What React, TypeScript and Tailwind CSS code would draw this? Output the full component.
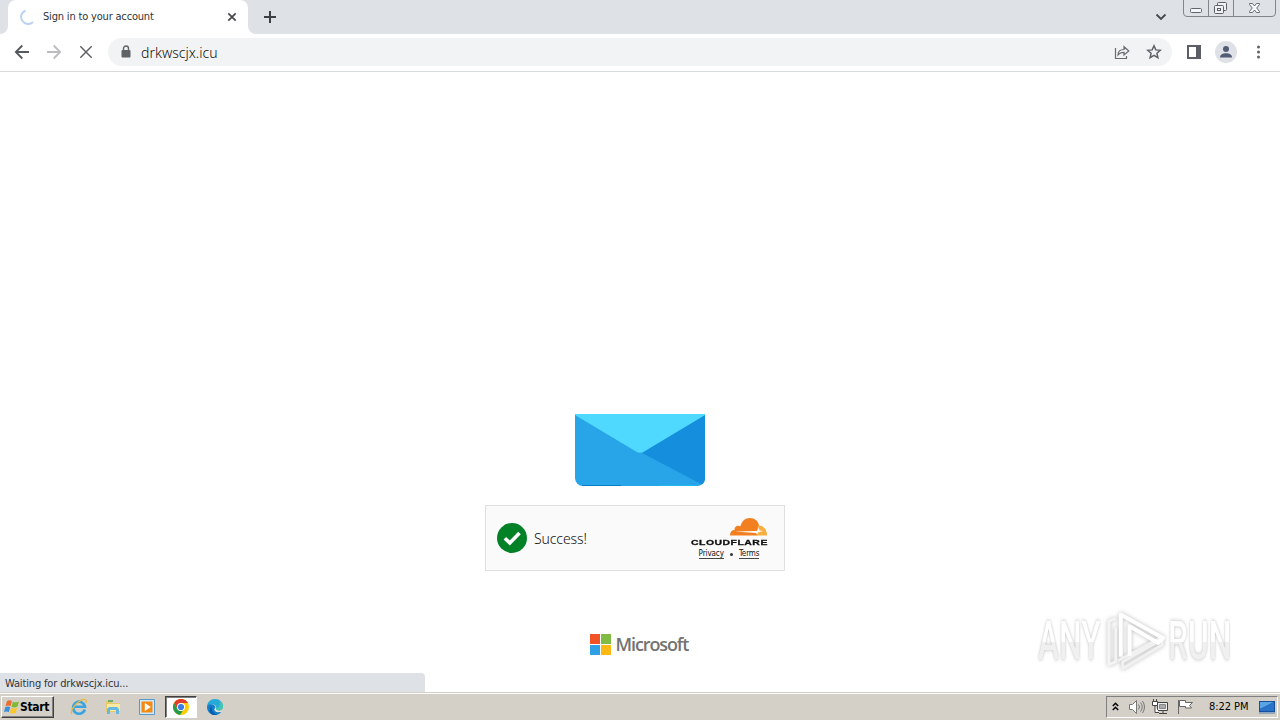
import type { ReactNode } from "react";

const ui = "font-['DejaVu_Sans_Condensed','DejaVu_Sans',sans-serif] font-stretch-condensed";

function TabStrip() {
  return (
    <div className="flex h-[34px] shrink-0 bg-[#dee1e6]">
      <div className="relative ml-2 flex h-full w-60 items-center rounded-t-lg bg-white pl-3">
        <svg className="absolute bottom-0 -left-2 h-2 w-2" viewBox="0 0 8 8">
          <path d="M8 0v8H0a8 8 0 0 0 8-8z" fill="#fff" />
        </svg>
        <svg className="absolute -right-2 bottom-0 h-2 w-2" viewBox="0 0 8 8">
          <path d="M0 0v8h8a8 8 0 0 1-8-8z" fill="#fff" />
        </svg>
        <svg className="h-4 w-4 shrink-0" viewBox="0 0 16 16" fill="none">
          <path d="M5.500 1.500A7 7 0 1 0 13 13" stroke="#bcd2f3" strokeWidth="2" />
        </svg>
        <span className="mt-px ml-[7px] w-[184px] text-[11px] tracking-[-0.18px] whitespace-nowrap text-[#303336]">
          Sign in to your account
        </span>
        <svg className="h-[10px] w-[10px] shrink-0" viewBox="0 0 10 10">
          <path d="M1.300 1.300l7.400 7.400M8.700 1.300L1.300 8.700" stroke="#45494d" strokeWidth="1.700" />
        </svg>
      </div>
      <svg className="mt-[10px] ml-[15px] h-[14px] w-[14px]" viewBox="0 0 14 14">
        <path d="M7 1v12M1 7h12" stroke="#3c4043" strokeWidth="2" />
      </svg>
      <svg className="mt-[13px] ml-auto h-2 w-3" viewBox="0 0 12 8" fill="none">
        <path d="M1.500 1.500L6 6l4.500-4.500" stroke="#45494d" strokeWidth="1.800" />
      </svg>
      <WindowButtons />
    </div>
  );
}

function WindowButtons() {
  return (
    <svg className="mr-1 ml-4 h-[17px] w-[93px]" viewBox="0 0 93 17" fill="none" stroke="#82868c">
      <path d="M.5 0v13a3.500 3.500 0 0 0 3.500 3.500h85a3.500 3.500 0 0 0 3.500-3.500V0M25.500 0v16M50.500 0v16" />
      <rect x="7.500" y="8.500" width="11" height="4" rx="1" fill="#f5f6f8" stroke="#62666c" />
      <g fill="#eef0f3" stroke="#5d6167">
        <rect x="34.500" y="2.500" width="9" height="8" rx="1" />
        <rect x="31.500" y="5.500" width="9" height="8" rx="1" />
        <rect x="34.500" y="8.500" width="3" height="2" />
      </g>
      <path
        d="M66.500 3.500h3l2 2.500 2-2.500h3v1l-2.800 3.500 2.800 3.500v1h-3l-2-2.500-2 2.500h-3v-1L69.300 8l-2.800-3.500z"
        fill="#f8f9fa"
        stroke="#686c72"
      />
    </svg>
  );
}

function Toolbar() {
  return (
    <div className="flex h-[38px] shrink-0 items-center border-b border-[#d8dadd] bg-white pb-px pl-[14px]">
      <svg className="h-4 w-4" viewBox="0 0 16 16" fill="none" stroke="#55595e" strokeWidth="1.800">
        <path d="M15 8H2M8.300 1.500L1.800 8l6.500 6.500" />
      </svg>
      <svg className="ml-4 h-4 w-4" viewBox="0 0 16 16" fill="none" stroke="#babcbe" strokeWidth="1.800">
        <path d="M1 8h13M7.700 1.500L14.200 8l-6.500 6.500" />
      </svg>
      <svg className="ml-4 h-4 w-4" viewBox="0 0 16 16" fill="none" stroke="#5f6368" strokeWidth="1.500">
        <path d="M2.300 2.300l11.400 11.400M13.700 2.300L2.300 13.700" />
      </svg>
      <div className="ml-[14px] flex h-7 w-[1064px] items-center rounded-full bg-[#f1f3f4] pl-3">
        <svg className="h-[14px] w-3" viewBox="0 0 12 14">
          <rect x="1.500" y="5" width="9" height="7.500" rx="1" fill="#5f6368" />
          <path d="M3.500 6V3.500a2.500 2.500 0 0 1 5 0V6" fill="none" stroke="#5f6368" strokeWidth="1.400" />
        </svg>
        <span className="mt-px ml-[9px] font-['Noto_Sans','Open_Sans',sans-serif] text-[14px] font-light tracking-[0.02px] text-[#111]">
          drkwscjx.icu
        </span>
        <svg className="ml-auto h-4 w-4" viewBox="0 0 16 16" fill="none" stroke="#686c70" strokeWidth="1.200">
          <path d="M1.500 4v10.500h11V12" />
          <path d="M4 11c0-4 2.300-5.500 6-5.500V2.700L14.800 7 10 11V8.300C7.500 8.300 5.500 9 4 11z" />
        </svg>
        <svg className="mr-[10px] ml-4 h-4 w-4" viewBox="0 0 16 16" fill="none" stroke="#5f6368" strokeWidth="1.500">
          <path d="M8 1.800l1.800 4.100 4.500.4-3.400 2.900 1 4.400L8 11.300l-3.900 2.300 1-4.400-3.400-2.900 4.500-.4z" />
        </svg>
      </div>
      <svg className="ml-[14px] h-4 w-4" viewBox="0 0 16 16">
        <path d="M1 1h14v14H1z" fill="#5b5e65" />
        <path d="M3 3h7v10H3z" fill="#fff" />
      </svg>
      <svg className="ml-[13px] h-[22px] w-[22px]" viewBox="0 0 22 22">
        <circle cx="11" cy="11" r="11" fill="#dee1e6" />
        <circle cx="11" cy="8" r="3" fill="#515b73" />
        <path d="M5 16.500c0-3 3-4.200 6-4.200s6 1.200 6 4.200z" fill="#515b73" />
      </svg>
      <svg className="ml-[19px] h-4 w-[5px]" viewBox="0 0 5 16" fill="#5f6368">
        <circle cx="2.500" cy="3" r="1.500" />
        <circle cx="2.500" cy="8" r="1.500" />
        <circle cx="2.500" cy="13" r="1.500" />
      </svg>
    </div>
  );
}

function Envelope() {
  return (
    <svg className="mt-[342px] h-[72px] w-[130px] shrink-0" viewBox="0 0 130 72">
      <path d="M0 1h130v63a8 8 0 0 1-8 8H8a8 8 0 0 1-8-8z" fill="#28a5e9" />
      <path d="M130 1v63c0 3-1 5-3 6.500L67 39z" fill="#158ede" />
      <path d="M0 0h130v1L69 37.500q-4 2.500-8 0L0 1z" fill="#50d9ff" />
      <path d="M7 71.500h39" stroke="#087bc9" />
      <path d="M84 71.500h38" stroke="#20b8ed" />
    </svg>
  );
}

function Turnstile() {
  return (
    <div className="mt-[19px] mr-[10px] flex h-[66px] w-[300px] shrink-0 items-center border border-[#e0e0e0] bg-[#fafafa] pl-[11px]">
      <svg className="h-[30px] w-[30px]" viewBox="0 0 30 30">
        <circle cx="15" cy="15" r="15" fill="#038127" />
        <path d="M7.800 15.200l5 4.700L22.500 10" fill="none" stroke="#fff" strokeWidth="3.600" />
      </svg>
      <span className="ml-[7px] font-['Noto_Sans','Open_Sans',sans-serif] text-[14px] font-light tracking-[-0.1px] text-[#111]">
        Success!
      </span>
      <div className="mt-px mr-4 ml-auto flex w-[78px] flex-col items-center">
        <svg className="mr-[1px] h-[18px] w-[37px] self-end" viewBox="0 0 37 18">
          <path
            d="M0 17.500c0-3.500 1.700-5.500 4.600-5.500-.5-3.300 3-5.300 5.700-3.600C11.700 3.500 15 0 20 0c4.700 0 8 3 9 7.300l-2 10.200z"
            fill="#f38020"
          />
          <path d="M26 17.500l2-10c5-.5 9 3.500 9 10z" fill="#faae40" />
          <path d="M5 13.600l21-.6c1.500 0 2-1.500 2.500-4l1 3.500 4 .5-5 1.200-1.500 2-1-1.200z" fill="#fff" />
        </svg>
        <div className="mt-[2px] h-[9px] w-[76px]">
          <div className="w-max origin-left scale-x-[1.300] font-['Liberation_Sans',sans-serif] text-[8px] leading-[9px] font-bold font-stretch-normal tracking-[0.400px] text-[#111] [-webkit-text-stroke:0.300px_#111]">
            CLOUDFLARE
          </div>
        </div>
        <div className={`${ui} mt-[3px] flex h-[9px] items-center text-[8px] leading-[8px] tracking-[-0.100px] text-[#111]`}>
          <span className="border-b border-[#444]">Privacy</span>
          <span className="mx-[6px] h-[3px] w-[3px] rounded-full bg-[#333]" />
          <span className="border-b border-[#444]">Terms</span>
        </div>
      </div>
    </div>
  );
}

function MicrosoftLogo() {
  return (
    <div className="mt-[62px] mr-[2px] flex h-[22px] items-center gap-[5px]">
      <div className="grid h-[21px] w-[21px] grid-cols-2 gap-px">
        <span className="bg-[#f15325]" />
        <span className="bg-[#80bc43]" />
        <span className="bg-[#2fa0e4]" />
        <span className="bg-[#fdb913]" />
      </div>
      <span className="w-[73px] font-['Open_Sans',sans-serif] text-[18px] leading-[22px] font-semibold font-stretch-normal tracking-[-1.100px] whitespace-nowrap text-[#737373]">
        Microsoft
      </span>
    </div>
  );
}

function Watermark() {
  const word =
    "font-['Roboto',sans-serif] text-[53px] leading-[54px] font-medium font-stretch-normal whitespace-nowrap bg-linear-to-b from-white from-52% to-[#f0f0f0] to-52% bg-clip-text text-transparent drop-shadow-[0_0_2px_#bbb]";
  return (
    <div className="absolute top-[536px] left-[1038px] flex h-[66px] w-[200px] items-center">
      <div className="w-[67px]">
        <div className={`${word} w-max origin-left scale-x-[0.6]`}>ANY</div>
      </div>
      <svg
        className="h-[66px] w-[63px] shrink-0 overflow-visible drop-shadow-[0_0_2px_#bbb]"
        viewBox="0 0 64 66"
        fill="none"
        stroke="#fff"
        strokeWidth="4"
        strokeLinejoin="round"
      >
        <path d="M11 10l-7 3v44l7-3V19" strokeWidth="3" stroke="#f4f4f4" />
        <path d="M13 53l45-24v8L18 61v-7l37-21" strokeWidth="3" stroke="#f1f1f1" />
        <path d="M16 49V6l43 24-5 5-29-17v30" />
      </svg>
      <div>
        <div className={`${word} w-max origin-left scale-x-[0.6]`}>RUN</div>
      </div>
    </div>
  );
}

function Page() {
  return (
    <div className="relative flex h-[620px] shrink-0 flex-col items-center overflow-hidden bg-white">
      <Envelope />
      <Turnstile />
      <MicrosoftLogo />
      <Watermark />
      <div
        className={`${ui} absolute bottom-0 left-0 h-[19px] w-[425px] rounded-tr bg-[#dee1e6] pt-px pl-[5px] text-[11px] leading-[19px] tracking-[-0.15px] text-[#303336]`}
      >
        Waiting for drkwscjx.icu...
      </div>
    </div>
  );
}

function WindowsFlag() {
  return (
    <svg className="h-4 w-4 shrink-0" viewBox="0 0 16 16">
      <path d="M3 2c2-1.300 3.500-1 5 0L6.500 7.300c-1.500-1-3-1-5 0z" fill="#ef6b2e" />
      <path d="M9 2.500c2 1.200 4 1 6 0l-1.500 5c-2 1.200-4 1.200-6 .2z" fill="#7fba34" />
      <path d="M1.200 8.300c2-1 3.500-1 5 0l-1.400 5c-1.500-1-3-1-4.800 0z" fill="#3b8ede" />
      <path d="M7.200 8.700c2 1 4 1 6 0l-1.500 5c-2 1.200-4 1-6 0z" fill="#fbc52c" />
    </svg>
  );
}

function TaskIcon({ children }: { children: ReactNode }) {
  return (
    <svg className="h-[18px] w-[18px] shrink-0" viewBox="0 0 18 18">
      {children}
    </svg>
  );
}

function Taskbar() {
  return (
    <div className="flex h-7 shrink-0 items-center border-t border-[#d4d0c8] bg-[#d4d0c8] shadow-[inset_0_1px_0_#fff]">
      <div className="ml-[1px] flex h-[22px] w-[53px] items-center border border-t-white border-r-[#404040] border-b-[#404040] border-l-white pl-[2px] shadow-[inset_-1px_-1px_0_#808080]">
        <WindowsFlag />
        <span className={`${ui} mt-px text-[12px] font-bold tracking-[-0.35px] text-black`}>Start</span>
      </div>
      <div className="ml-4 flex items-center">
        <TaskIcon>
          <path d="M14.800 11.500A6 6 0 1 1 15 8.800H4" fill="none" stroke="#39a4df" strokeWidth="2.600" />
          <path d="M2 16C-.5 14 4 7 9 3.500 13 .7 17.500 0 16 5" fill="none" stroke="#e7b93d" strokeWidth="1.300" />
        </TaskIcon>
        <div className="w-4" />
        <TaskIcon>
          <path d="M2 3h5l1 2h8v9H2z" fill="#e7ca67" />
          <path d="M4 2h5v2H4z" fill="#70ad66" />
          <path d="M3 6h13v7H3z" fill="#fae9a5" />
          <path d="M3 16v-5l2-2h8l2 2v5h-3v-4H6v4z" fill="#67b8de" />
        </TaskIcon>
        <div className="w-4" />
        <TaskIcon>
          <path d="M1.500 1.500h15v15h-15z" fill="#d2e9fa" stroke="#5a99cc" />
          <path d="M3.500 3.500h11v11h-11z" fill="#f58a13" />
          <path d="M6.800 5l6 4-6 4z" fill="#fff" />
        </TaskIcon>
        <div className="ml-[9px] flex h-[22px] w-8 items-center justify-center border border-t-[#404040] border-r-white border-b-white border-l-[#404040] bg-white shadow-[inset_1px_1px_0_#808080]">
          <svg className="h-4 w-4" viewBox="0 0 16 16">
            <circle cx="8" cy="8" r="8" fill="#fc0" />
            <path d="M1 4a8 8 0 0 1 14 0H8a4 4 0 0 0-3.500 6z" fill="#e33b2e" />
            <path d="M1 4a8 8 0 0 0 6 11.900L11 10a4 4 0 0 1-6.500 0z" fill="#269c4b" />
            <circle cx="8" cy="8" r="4" fill="#fff" />
            <circle cx="8" cy="8" r="3.100" fill="#397de5" />
          </svg>
        </div>
        <div className="w-[9px]" />
        <TaskIcon>
          <path d="M9 1c5 0 8 3.500 8 7 0 3-2 4.500-4.500 4.500-2 0-3-.8-2.500-2 1-2-1-4-3.500-4C3.500 6.500 1 8 1 9c0-5 3.600-8 8-8z" fill="#25a9d9" />
          <path d="M13 2.500c3 1.500 4 3.500 4 6s-2 4-4.500 4c-2 0-3-.8-2.500-2 3 0 5-4 3-8z" fill="#42c6b0" />
          <path d="M1 9c0-2 2.500-3.500 5.500-2.500 2 .6 3 2 3 3.500-3 2 1 6 6 3.500C13 17 9.500 17.500 7 16.800 3.500 16 1 13 1 9z" fill="#137ec9" />
          <path d="M6 8c-1 4 1 7.500 5 8.500-3 1-6 0-7-2.500-1-2 0-5 2-6z" fill="#075aa7" />
          <path d="M9.500 9.500c-2 1.500-.5 4.500 3 4.500 2 0 3-.3 4-1-1 .2-4 .3-6-1-.6-.5-.8-1-.5-1.500z" fill="#e6e6e0" />
        </TaskIcon>
      </div>
      <div className="mr-[2px] ml-auto flex h-[22px] w-[172px] items-center border border-t-[#808080] border-r-white border-b-white border-l-[#808080] pl-[5px]">
        <svg className="mb-px h-[9px] w-[7px]" viewBox="0 0 7 9" fill="none" stroke="#000" strokeWidth="1.500">
          <path d="M.8 4l2.700-2.700L6.200 4M.8 8l2.700-2.700L6.200 8" />
        </svg>
        <svg className="ml-[9px] h-4 w-[17px]" viewBox="0 0 17 16" fill="none" stroke="#777">
          <path d="M1.500 5.500h3l4-4v13l-4-4h-3z" fill="#fff" />
          <path d="M10.500 5.500q2 2.500 0 5M12.500 3.500q3.500 4.500 0 9M14.500 2q4 6 0 12" />
        </svg>
        <svg className="ml-[7px] h-4 w-[17px]" viewBox="0 0 17 16" fill="none" stroke="#444">
          <path d="M5.500 3.500h10v8h-10zM7 14.500h8M11 12v2" fill="#eee" />
          <path d="M7.500 5.500h6v4h-6z" fill="#aaa" stroke="#888" />
          <path d="M.5 2.500h5v4h-5zM1.500 0v2M4.500 0v2M3 7v6.500h4" fill="#fff" />
        </svg>
        <svg className="ml-[8px] h-4 w-[17px]" viewBox="0 0 17 16" fill="#fff" stroke="#666">
          <path d="M2.500 1.500h6v2h7l-3 3 2 2.500h-6v-1.500h-6zM1.500 1v14" />
        </svg>
        <span className={`${ui} mt-[2px] ml-[15px] w-[50px] text-[11px] tracking-[-0.05px] whitespace-nowrap text-black`}>
          8:22 PM
        </span>
        <svg className="h-[14px] w-4 shrink-0" viewBox="0 0 16 14">
          <path d="M0 1h16v11H0z" fill="#164f9e" />
          <path d="M1 2h14L1 9z" fill="#5aa3e5" />
          <path d="M1 9l14-7v9H1z" fill="#2872c7" />
          <path d="M0 12h16v2H0z" fill="#8fa7bb" />
        </svg>
      </div>
    </div>
  );
}

export default function App() {
  return (
    <div className={`${ui} flex h-[720px] w-[1280px] flex-col overflow-hidden bg-white`}>
      <TabStrip />
      <Toolbar />
      <Page />
      <Taskbar />
    </div>
  );
}
